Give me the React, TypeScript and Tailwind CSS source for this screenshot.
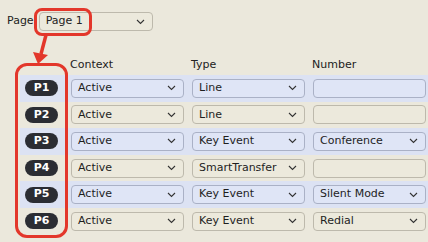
import React from 'react';

type Row = { id: string; context: string; type: string; number?: string };

const rows: Row[] = [
  { id: 'P1', context: 'Active', type: 'Line' },
  { id: 'P2', context: 'Active', type: 'Line' },
  { id: 'P3', context: 'Active', type: 'Key Event', number: 'Conference' },
  { id: 'P4', context: 'Active', type: 'SmartTransfer' },
  { id: 'P5', context: 'Active', type: 'Key Event', number: 'Silent Mode' },
  { id: 'P6', context: 'Active', type: 'Key Event', number: 'Redial' },
];

function Chevron() {
  return (
    <svg width="9" height="6" viewBox="0 0 9 6" className="shrink-0">
      <path d="M1 1 L4.5 4.5 L8 1" fill="none" stroke="#333" strokeWidth="1.1" />
    </svg>
  );
}

function Select({ value, blue, arrow = true }: { value?: string; blue: boolean; arrow?: boolean }) {
  return (
    <div
      className={`w-[113px] h-[19px] shrink-0 rounded-[4px] border flex items-center justify-between pl-[6px] pr-[7px] text-[11px] text-[#1e1e1e] ${
        blue ? 'bg-[#dfe5f6] border-[#aab1c6]' : 'bg-[#ece9dc] border-[#bdb9ac]'
      }`}
    >
      <span>{value}</span>
      {arrow && <Chevron />}
    </div>
  );
}

export default function App() {
  return (
    <div
      className="relative w-[428px] h-[242px] overflow-hidden bg-[#ebe8dc] text-[#222]"
      style={{ fontFamily: '"DejaVu Sans", Verdana, sans-serif' }}
    >
      {/* Page selector */}
      <div className="flex items-center gap-[5px] pl-[7px] pt-[12px] text-[11px]">
        <span>Page</span>
        <div className="w-[114px] h-[19px] rounded-[4px] border border-[#bdb9ac] bg-[#ece9dc] flex items-center justify-between pl-[6px] pr-[7px]">
          <span>Page 1</span>
          <Chevron />
        </div>
      </div>

      {/* Column headers */}
      <div className="flex pl-[70px] mt-[27px] h-[14px] items-center text-[11px]">
        <span className="w-[121px]">Context</span>
        <span className="w-[121px]">Type</span>
        <span>Number</span>
      </div>

      {/* Rows */}
      <div className="mt-[3px] ml-[20px]">
        {rows.map((r, i) => {
          const blue = i % 2 === 0;
          return (
            <div
              key={r.id}
              className={`h-[26.6px] flex items-center pl-[5px] ${blue ? 'bg-[#dce2f3]' : ''}`}
            >
              <div className="w-[33px] h-[16px] rounded-full bg-[#2b2d33] text-white text-[11px] font-bold flex items-center justify-center shrink-0">
                {r.id}
              </div>
              <div className="flex gap-[8px] ml-[13px]">
                <Select value={r.context} blue={blue} />
                <Select value={r.type} blue={blue} />
                <Select value={r.number} blue={blue} arrow={!!r.number} />
              </div>
            </div>
          );
        })}
      </div>

      {/* Callouts */}
      <div className="absolute left-[34px] top-[8px] w-[58px] h-[28px] rounded-[8px] border-[3.5px] border-[#e3372b]" />
      <div className="absolute left-[15px] top-[63px] w-[53px] h-[175px] rounded-[12px] border-[3.5px] border-[#e3372b]" />
      <svg className="absolute left-0 top-0" width="80" height="70" viewBox="0 0 80 70">
        <line x1="46" y1="35" x2="41" y2="54" stroke="#e3372b" strokeWidth="3.5" />
        <polygon points="33,52 48,55 38,64" fill="#e3372b" />
      </svg>
    </div>
  );
}
